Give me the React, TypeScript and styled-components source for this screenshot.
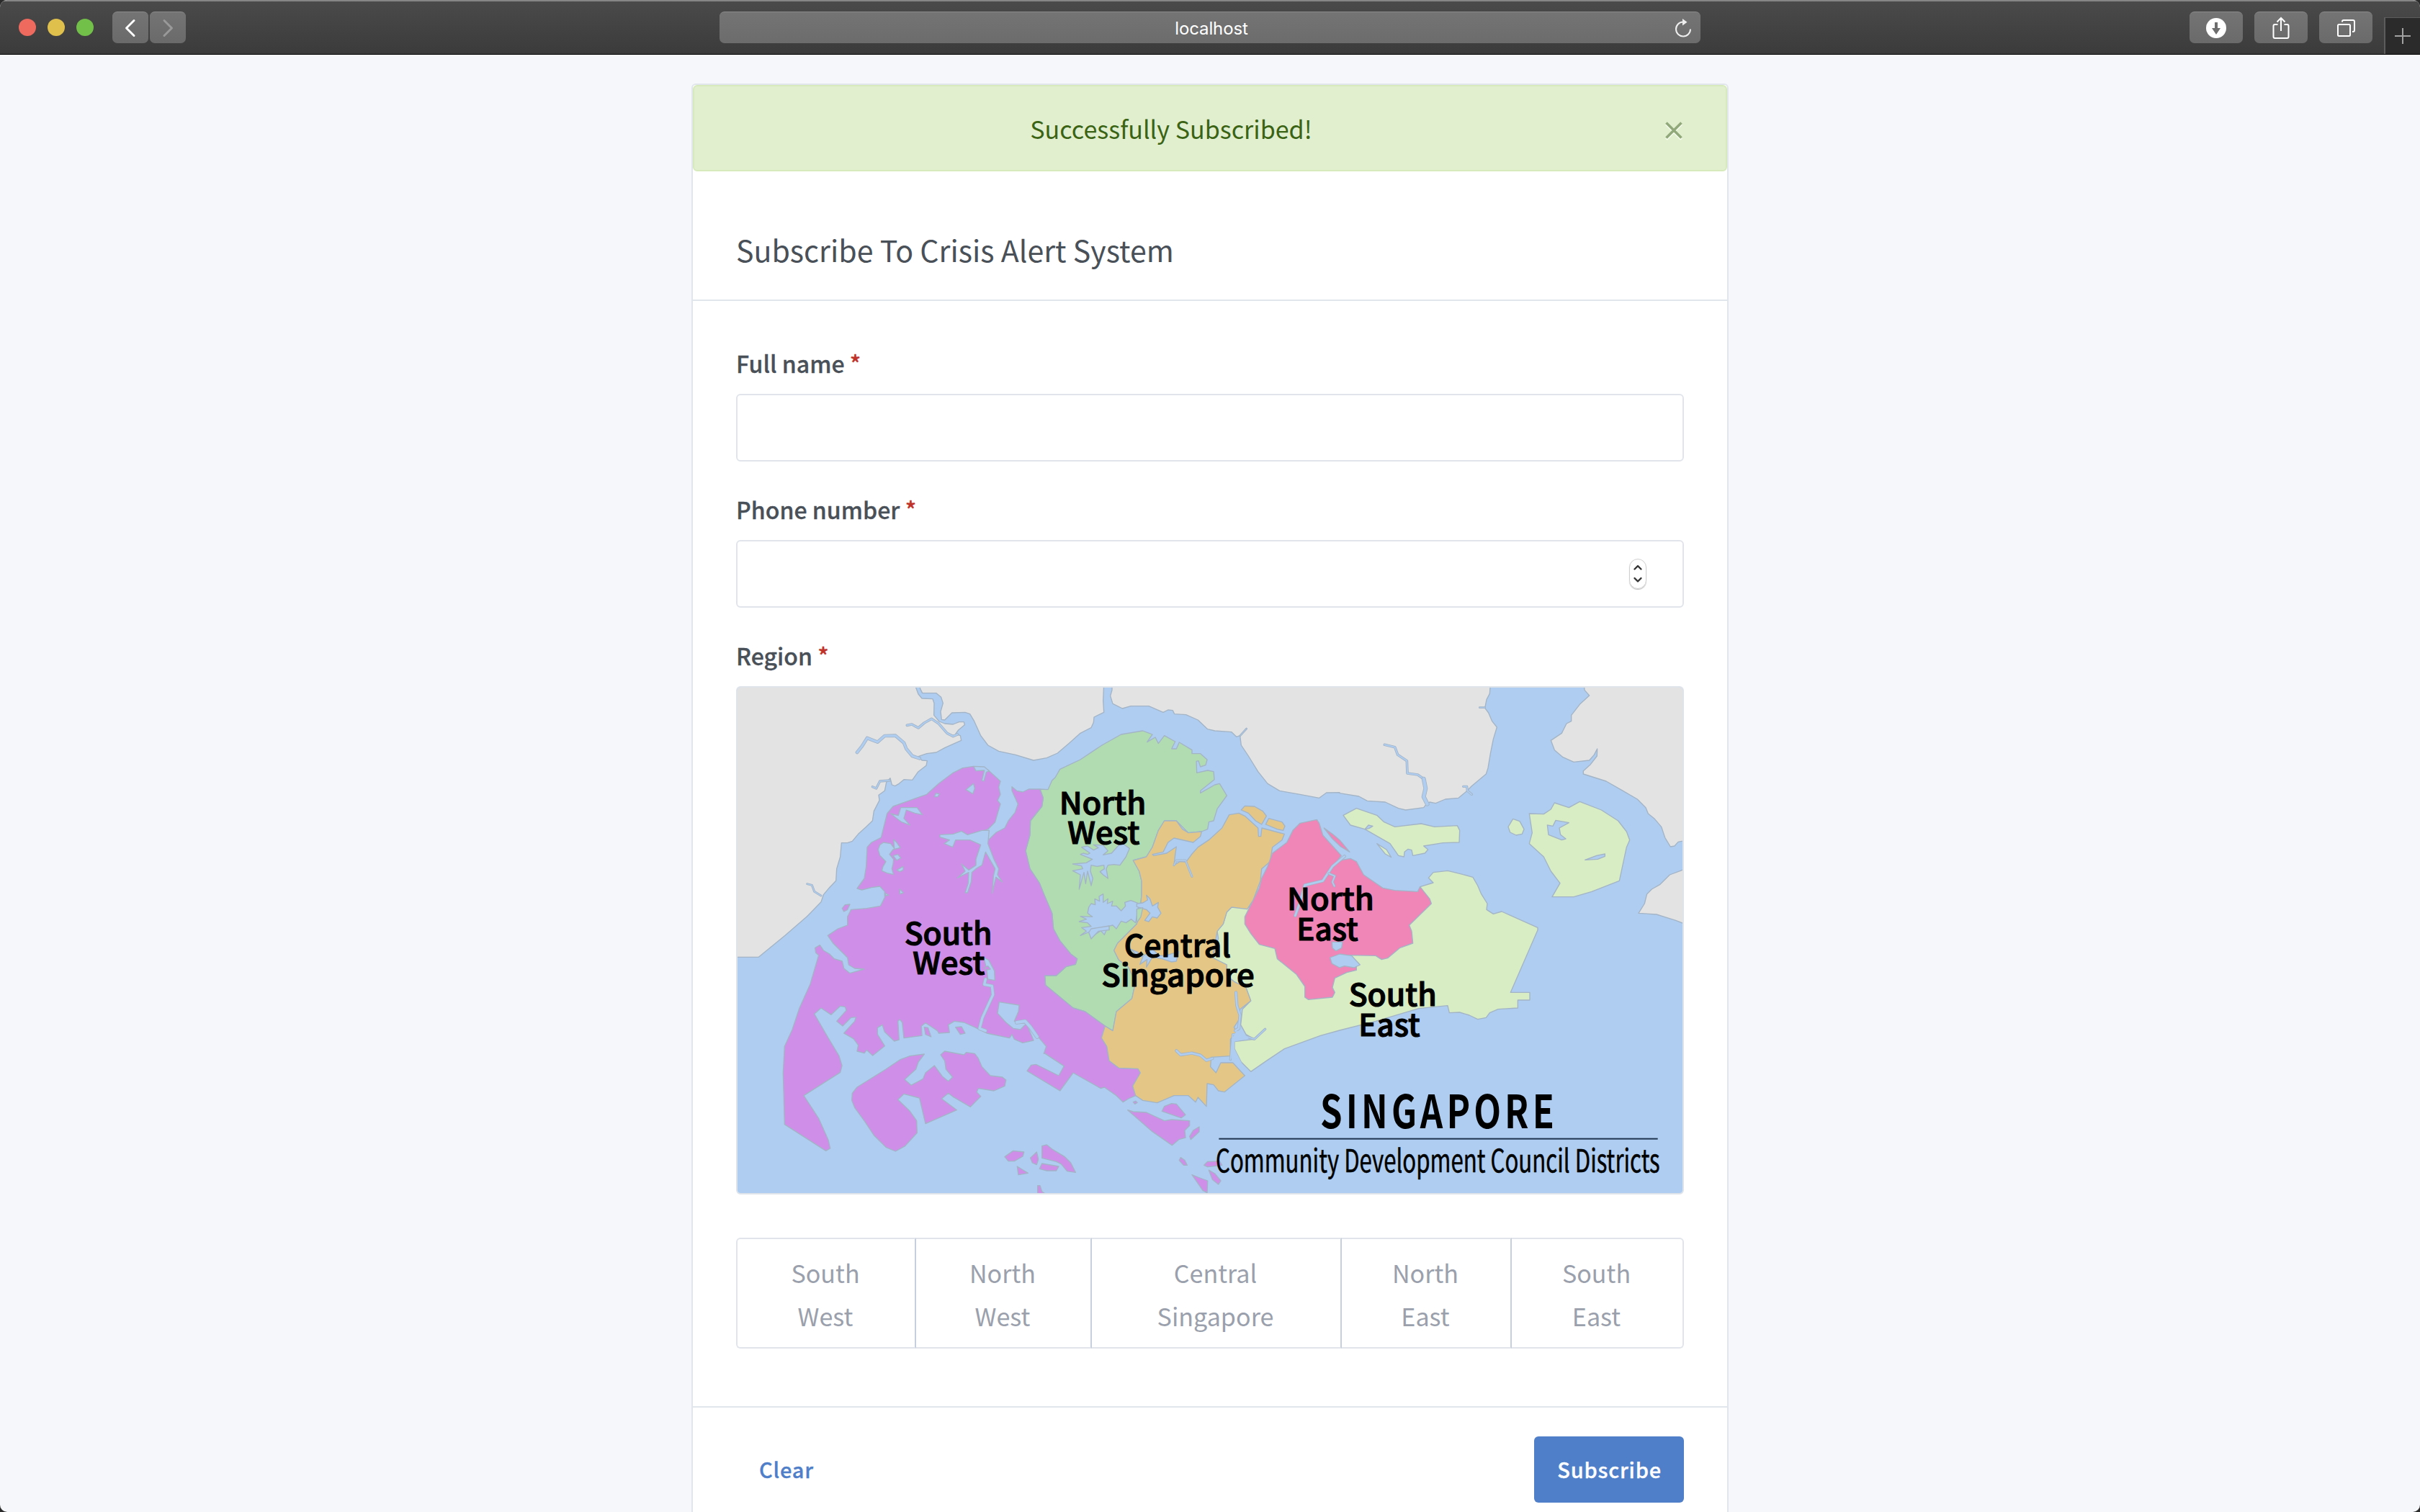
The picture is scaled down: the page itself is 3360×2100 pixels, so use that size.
import React from 'react';
import styled, { createGlobalStyle } from 'styled-components';

const sans = `"Noto Sans CJK SC", "Noto Sans", sans-serif`;

const GlobalStyle = createGlobalStyle`
  * { box-sizing: border-box; }
  html, body { margin: 0; padding: 0; background: #2b2b2b; }
  body { font-family: ${sans}; color: #495057; overflow: hidden; }
  button { font-family: inherit; }
`;

const BrowserWindow = styled.div`
  width: 3360px;
  height: 2100px;
  display: flex;
  flex-direction: column;
  overflow: hidden;
  border-radius: 10px;
  background: #f5f7fb;
`;

/* ---------- Browser toolbar ---------- */

const Toolbar = styled.header`
  flex: none;
  height: 76px;
  display: flex;
  align-items: flex-start;
  padding-left: 26px;
  background: linear-gradient(#4a4a4a, #3b3b3b);
  border-top: 2px solid #868686;
  border-bottom: 1px solid #000;
`;

const Lights = styled.div`
  display: flex;
  gap: 16px;
  margin: 24px 26px 0 0;
`;

const Light = styled.span<{ $color: string }>`
  width: 24px;
  height: 24px;
  border-radius: 50%;
  background: ${(p) => p.$color};
`;

const ToolButton = styled.button<{ $width: number }>`
  width: ${(p) => p.$width}px;
  height: 44px;
  margin-top: 14px;
  padding: 0;
  display: flex;
  align-items: center;
  justify-content: center;
  border: 0;
  border-top: 1px solid #8b8b8b;
  border-radius: 7px;
  background: linear-gradient(#747474, #6a6a6a);
`;

const NavGroup = styled.div`
  display: flex;
  gap: 2px;
  width: 843px;
`;

const AddressBar = styled.div`
  width: 1362px;
  height: 44px;
  margin-top: 14px;
  display: grid;
  grid-template-columns: 40px 1fr 38px;
  align-items: center;
  border-top: 1px solid #8b8b8b;
  border-radius: 7px;
  background: linear-gradient(#747474, #6c6c6c);
`;

const Address = styled.span`
  grid-column: 2;
  text-align: center;
  font: 400 24px/44px Inter, sans-serif;
  letter-spacing: -0.1px;
  padding: 1px 0 0 2px;
  color: #fff;
`;

const ToolGroup = styled.div`
  display: flex;
  gap: 16px;
  margin-left: auto;
  margin-right: 16px;
`;

const NewTab = styled.div`
  width: 50px;
  height: 51px;
  margin-top: 22px;
  display: flex;
  align-items: center;
  justify-content: center;
  background: #2b2b2b;
  border-left: 2px solid #5c5c5c;
  border-top: 1px solid #5c5c5c;
`;

/* ---------- Subscription card ---------- */

const Page = styled.main`
  flex: 1;
  min-height: 0;
  display: flex;
  justify-content: center;
  align-items: flex-start;
  padding-top: 40px;
`;

const Card = styled.form`
  width: 1440px;
  height: 2060px;
  border: 2px solid #e1e5ec;
  border-radius: 6px;
  background: #fff;
`;

const Alert = styled.div`
  height: 120px;
  display: flex;
  align-items: center;
  padding: 0 60px 0 26px;
  border: 2px solid #d6eabb;
  border-radius: 6px;
  background: #e1efcf;
`;

const AlertText = styled.span`
  flex: 1;
  text-align: center;
  font-size: 34.1px;
  line-height: 60px;
  color: #3a6314;
`;

const CloseButton = styled.button`
  width: 74px;
  height: 40px;
  padding: 8px 0 0;
  display: flex;
  align-items: center;
  justify-content: flex-end;
  border: 0;
  background: none;
`;

const CardHeader = styled.div`
  height: 180px;
  display: flex;
  align-items: center;
  padding: 38px 60px 0;
  border-bottom: 2px solid #e1e5ec;
`;

const CardTitle = styled.h3`
  margin: 0;
  font-size: 41.1px;
  font-weight: 400;
  line-height: 60px;
`;

const CardBody = styled.div`
  padding: 62px 60px 80px;
`;

const Field = styled.div<{ $last?: boolean }>`
  display: flex;
  flex-direction: column;
  gap: 19px;
  margin-bottom: ${(p) => (p.$last ? 60 : 42)}px;
`;

const Label = styled.label`
  font-size: 32.1px;
  font-weight: 500;
  line-height: 48px;
  -webkit-text-stroke: 0.3px currentColor;
`;

const Required = styled.span`
  color: #bf3229;
`;

const Input = styled.div`
  height: 94px;
  display: flex;
  align-items: center;
  justify-content: flex-end;
  padding-right: 50px;
  border: 2px solid #e1e5eb;
  border-radius: 6px;
`;

const Stepper = styled.span`
  width: 24px;
  height: 42px;
  display: flex;
  align-items: center;
  justify-content: center;
  border: 1px solid #cfcfcf;
  border-radius: 12px;
  box-shadow: 0 1px 1px #bdbdbd;
`;

const MapFrame = styled.div`
  height: 706px;
  border: 2px solid #dfe4ea;
  border-radius: 6px;
  overflow: hidden;

  svg { display: block; width: 100%; height: 100%; }
`;

const RegionPicker = styled.div`
  display: grid;
  grid-template-columns: 250px 244px 347px 236px 239px;
  height: 154px;
`;

const RegionOption = styled.div`
  display: flex;
  flex-direction: column;
  align-items: center;
  padding: 16px 2px 0 0;
  border: 2px solid #e1e5eb;
  border-left-width: 0;
  border-right-color: #c6cfdd;
  font-size: 34.1px;
  line-height: 60px;
  color: #9aa0ac;

  &:first-child { border-left-width: 2px; border-radius: 6px 0 0 6px; }
  &:last-child { border-right-color: #e1e5eb; border-radius: 0 6px 6px 0; }
`;

const CardFooter = styled.div`
  display: flex;
  justify-content: space-between;
  padding: 40px 60px 0;
  border-top: 2px solid #e1e5ec;
`;

const ActionButton = styled.button<{ $primary?: boolean }>`
  height: 92px;
  padding: 0 31px 3px 32px;
  border: 0;
  border-radius: 6px;
  font-size: 29px;
  font-weight: 500;
  letter-spacing: 0.8px;
  -webkit-text-stroke: 0.3px currentColor;
  background: ${(p) => (p.$primary ? '#507fca' : 'none')};
  color: ${(p) => (p.$primary ? '#fff' : '#507fca')};
`;

/* ---------- Map ---------- */

/* The map is stored as six survey tiles; every tile has its own origin. */
const tiles = {
  A: [0, 0],
  B: [0, 1050],
  C: [1170, 0],
  D: [1170, 1050],
  E: [2550, 0],
  F: [2550, 1050],
} as const;

type Tile = keyof typeof tiles;

/* Turns "A 1,2 3,4 C 5,6" into a point list in map coordinates. */
const pts = (source: string): string => {
  let origin: readonly [number, number] = tiles.A;
  const out: string[] = [];
  for (const token of source.trim().split(/\s+/)) {
    if (token in tiles) {
      origin = tiles[token as Tile];
    } else {
      const [x, y] = token.split(',').map(Number);
      out.push(`${x + origin[0]},${y + origin[1]}`);
    }
  }
  return out.join(' ');
};

const Areas = ({ fill, shapes }: { fill: string; shapes: string[] }) => (
  <g fill={fill} stroke="#a3b4c6" strokeWidth="4" strokeLinejoin="round">
    {shapes.map((s) => (
      <polygon key={s} points={pts(s)} />
    ))}
  </g>
);

const River = ({ line, width = 8 }: { line: string; width?: number }) => (
  <g fill="none" strokeLinejoin="round" strokeLinecap="round">
    <polyline points={pts(line)} stroke="#a3b4c6" strokeWidth={width + 5} />
    <polyline points={pts(line)} stroke="#aecdf0" strokeWidth={width} />
  </g>
);

const land = [
  'A 30,30 785,30 785,45 795,72 810,90 855,92 861,110 860,160 882,186 905,195 940,198 965,188 985,188 988,200 962,222 950,238 970,245 974,265 940,280 905,296 870,315 830,320 795,332 810,348 832,350 828,370 795,395 770,430 735,428 715,445 698,455 685,450 678,422 662,440 655,475 630,493 633,515 610,560 604,600 575,628 545,655 520,685 500,692 475,692 470,750 455,800 452,850 425,878 400,908 390,938 330,1000 240,1078 B 130,118 30,118',
  'A 800,30 803,50 812,68 870,68 890,85 898,110 888,145 892,178 905,180 935,150 990,148 1010,155 1028,185 1055,245 1085,285 1130,310 1200,325 1275,348 C 105,348 160,338 205,318 255,275 300,235 345,212 355,190 357,168 398,148 395,100 398,30',
  'C 432,30 432,55 425,80 435,112 475,132 510,122 585,122 645,148 665,138 685,140 692,155 740,158 790,180 830,218 860,225 930,230 950,250 965,245 970,285 1000,330 1040,395 1080,445 1130,475 1215,490 1295,505 1325,483 1380,482 E 0,485 80,498 115,517 190,522 245,548 275,555 350,545 360,532 375,522 400,527 440,510 495,505 525,480 550,455 610,405 618,380 628,320 640,260 655,210 635,185 620,150 605,130 612,95 625,70 628,30',
  'E 1018,30 1020,55 1040,78 1000,115 965,160 965,185 945,195 925,235 880,265 895,305 930,335 975,355 1040,348 1060,325 1073,300 1072,330 1045,365 1015,392 1015,405 1110,435 1180,475 1240,510 1275,545 1285,570 1310,590 1340,625 1355,670 1378,708 1395,705 1410,688 1450,680 1450,30',
  'E 1450,795 1420,808 1375,825 1335,865 1300,885 1280,905 1270,945 1245,985 1320,990 1400,1015 1450,1035',
];

const northWest = [
  'C 132,468 165,470 182,432 195,420 215,385 300,345 390,285 470,240 560,225 600,240 578,272 612,252 625,278 650,245 695,270 680,300 700,300 712,273 765,305 765,320 800,320 828,345 822,368 800,375 792,350 783,352 785,400 830,390 855,395 858,428 800,475 800,484 860,450 880,445 910,495 870,550 855,600 835,605 830,635 805,645 750,650 720,620 700,600 650,600 625,640 600,710 575,750 520,765 545,810 555,850 555,910 550,960 535,1030 500,1065 D 480,35 455,60 440,90 460,130 500,160 530,220 515,290 450,345 435,425 403,405 375,385 320,345 270,330 155,235 152,195 200,195 240,158 280,148 287,125 260,105 215,50 C 188,1050 182,985 150,910 130,860 90,800 72,725 90,660 92,600 140,540 145,505',
];

const southWest = [
  'A 1025,373 980,380 940,400 880,445 830,490 760,515 690,540 665,570 650,630 640,670 600,690 582,710 578,790 570,840 540,882 560,888 600,878 635,873 655,895 655,920 637,955 580,965 515,970 500,1000 500,1035 460,1050 B 418,28 440,60 500,120 505,150 530,165 570,168 510,185 485,165 478,135 445,125 425,105 400,90 385,68 365,80 368,100 380,110 345,230 300,330 270,420 238,490 232,600 238,815 410,925 428,915 420,880 380,790 318,695 470,598 477,570 465,530 420,455 362,355 390,330 432,358 470,322 490,325 495,340 455,385 480,405 515,370 535,368 530,385 485,435 525,458 545,485 540,510 570,518 580,505 605,528 655,488 625,440 625,412 645,400 655,430 695,468 715,462 710,385 718,378 728,390 735,455 810,445 808,405 825,392 845,405 875,425 880,435 925,432 920,400 945,385 985,390 1030,410 1080,435 1175,455 1185,440 1195,460 1230,475 1275,465 1250,405 1265,405 1290,445 1328,490 1318,520 D 150,518 232,572 210,612 115,565 95,568 78,592 215,675 270,600 385,665 400,660 450,695 478,722 500,708 530,695 518,655 550,600 540,583 460,580 420,550 410,490 388,455 403,405 375,385 320,345 270,330 155,235 152,195 200,195 240,158 280,148 287,125 260,105 215,50 C 188,1050 182,985 150,910 130,860 90,800 72,725 90,660 92,600 140,540 145,505 132,468 85,468 60,480 35,475 15,458 15,475 40,530 28,565 0,600 -15,630 -50,648 -88,685 -100,700 -100,640 A 1085,635 1115,605 1125,570 1137,530 1125,515 1137,490 1130,460 1137,435 1090,392 1070,380 1035,390',
  'B 820,522 760,530 720,545 660,585 540,660 520,685 518,715 530,745 570,800 610,860 660,910 700,927 740,905 790,850 788,800 760,760 710,712 735,688 800,705 825,812 955,755 892,708 920,685 940,700 1012,742 1055,698 1038,680 1045,665 1110,675 1155,655 1160,630 1145,618 1095,612 1060,575 1045,540 1030,520 995,515 985,525 905,510 888,525 905,550 910,585 938,618 920,635 895,615 862,570 825,600 815,625 765,652 738,628 785,585 795,555',
  'B 1155,950 1190,925 1235,930 1230,948 1195,968 1170,968',
  'B 1262,955 1288,930 1295,960 1288,983 1270,975',
  'B 1207,990 1252,1018 1212,1025',
  'D 140,905 160,900 185,920 235,950 260,975 280,1015 245,1010 220,980 200,970 140,955',
  'D 140,978 210,990 200,1008 160,1008 130,1000',
  'D 122,1070 132,1070 140,1095 155,1105 122,1105',
  'D 497,755 520,762 575,765 650,800 680,795 755,800 755,820 735,840 738,870 710,878 682,902 600,845',
  'D 680,728 700,730 738,775 720,788 640,760 650,740',
  'D 795,825 795,845 760,878 755,865 770,840',
  'D 718,953 735,965 745,985 730,985 712,965',
  'D 765,1025 790,1035 830,1050 828,1100 810,1090',
  'D 835,1005 860,1020 885,1050 875,1065 850,1045',
  'D 815,985 830,970 880,968 890,985 830,992',
  'D 520,722 530,718 537,724 527,730',
  'A 478,965 490,950 510,948 500,970 485,978',
];

const southEast = [
  'C 930,960 1000,960 E 290,1000 340,960 370,940 335,875 390,858 370,838 390,815 450,808 500,820 555,835 575,870 590,905 615,945 612,970 640,988 675,978 825,1045 F 825,5 712,265 792,265 792,297 742,297 742,330 660,335 625,350 610,370 575,377 540,360 500,348 457,350 450,320 330,332 150,385 0,423 D 1300,445 1150,500 1075,550 1010,595 970,555 942,500 942,470 1025,460 990,440 968,400 975,335 1010,300 990,245 940,220 910,195 910,150 850,120 875,40 870,10 C 895,1030 910,980',
  'E 15,577 70,548 155,577 185,605 230,625 340,612 395,625 490,620 500,640 498,690 430,692 350,705 368,720 355,735 305,745 300,722 285,718 270,730 268,750 245,745 210,695 105,635 45,618',
  'E 790,570 850,572 880,552 895,525 955,545 1000,520 1090,555 1160,600 1195,645 1208,680 1195,710 1165,850 1050,895 975,917 885,917 918,860 880,810 850,750 790,695 802,650',
  'E 722,592 750,602 768,635 760,655 735,660 710,648 702,625',
  'E 155,695 195,720 215,752 190,738',
];

const central = [
  'C 520,765 575,750 600,710 625,640 650,600 700,600 725,635 750,650 805,645 800,665 770,690 690,672 665,690 645,730 600,740 605,745 660,735 700,708 695,740 690,785 715,770 740,772 765,738 790,710 835,680 890,630 920,575 960,568 985,580 1040,630 1042,665 1052,665 1056,630 1150,655 1140,680 1100,710 1090,770 1055,800 1050,850 1020,930 995,968 930,960 910,980 895,1030 D 870,10 850,120 910,150 910,195 940,220 990,245 1010,300 965,335 960,380 940,410 950,430 925,460 925,530 845,535 842,575 865,600 885,558 935,558 985,612 900,680 875,675 855,650 828,645 825,740 790,702 780,722 750,695 690,695 620,725 560,715 530,695 518,655 550,600 540,583 460,580 420,550 410,490 388,455 403,405 435,425 450,345 515,290 530,220 500,160 460,130 440,90 455,60 480,35 C 500,1065 535,1030 550,960 555,910 555,850 545,810',
  'C 970,555 985,538 1025,540 1060,560 1075,580 1055,615 1030,600 1000,568',
  'C 1085,590 1140,605 1152,622 1145,640 1120,635 1072,615',
];

const northEast = [
  'C 1285,595 1215,610 1185,640 1160,690 1100,735 1080,790 1055,840 1045,880 1020,930 985,1000 985,1030 1010,1070 D 1045,65 1110,82 1120,125 1200,190 1235,240 1235,285 1250,295 1350,285 1360,265 1350,245 1360,205 1410,182 F 70,172 70,155 40,110 150,112 175,128 200,122 250,80 305,60 300,10 E 290,1035 382,945 375,925 335,875 325,895 230,890 180,880 100,825 70,770 45,757 0,765 C 1360,780 1387,745 1310,660 1295,610',
  'C 1315,630 1350,655 1380,680 1422,730 1385,708 1350,675',
];

const lakes = [
  'A 885,658 940,655 975,643 1000,658 1060,640 1090,640 1085,695 1110,760 1130,800 1125,825 1145,855 1118,835 1103,902 1108,830 1115,800 1075,730 1060,785 1035,800 1018,815 1015,855 1000,900 990,900 1003,860 1005,815 958,838 990,810 975,780 1005,805 1035,785 1035,760 1055,700 1010,680 950,680 938,710 903,695 925,680 885,668',
  'A 993,470 1025,445 1030,465 1022,488',
  'A 862,500 868,485 883,488 876,500',
  'A 680,570 712,578 722,545 790,545 812,575 780,568 745,555 735,590 760,618 725,605 705,590',
  'A 628,720 635,700 650,690 680,695 695,715 692,678 705,690 720,712 690,720 675,740 692,760 690,780 685,800 692,824 665,818 643,808 648,790 660,770 635,745',
  'A 690,745 710,740 722,755 705,765',
  'A 705,805 732,790 732,805 718,812',
  'A 718,885 733,900 718,905',
  'A 655,900 672,910 660,912',
  'A 1025,373 1070,375 1090,392 1078,398 1068,435 1060,432 1070,390 1035,392',
  'B 1132,305 1215,318 1212,345 1195,385 1245,395 1220,420 1190,415 1160,390 1125,352',
  'B 1068,120 1088,130 1112,175 1114,215 1085,210 1080,170',
  'C 268,780 325,775 350,760 300,740 312,735 330,740 340,735 305,710 330,705 355,722 375,712 355,700 395,702 415,725 395,742 430,735 470,690 505,715 490,750 465,785 440,782 415,785 408,800 415,840 395,825 382,812 400,800 398,785 370,790 345,785 342,810 352,840 345,870 330,810 322,862 315,815 295,885 300,825 268,808 310,800 305,788',
  'C 335,960 345,945 362,950 360,925 380,935 378,915 395,905 395,940 415,925 412,945 435,935 430,955 450,955 470,975 488,955 485,940 510,932 545,945 530,1025 512,1010 490,1025 470,1018 450,1050 435,1035 415,1040 400,1075 385,1058 360,1075 340,1062 300,1078 325,1060 305,1045 345,1040 330,1025 295,1020 325,1010 300,998 350,1000 330,985',
  'C 535,945 560,942 580,930 575,910 590,925 600,955 625,940 622,960 636,985 620,1005 600,1000 585,1020 568,1015 590,985 575,970 535,958',
  'D 345,0 375,-5 420,-12 420,5 375,10 345,42 335,15',
  'D 510,85 540,98 560,115 600,85 630,112 660,110 710,95 700,135 680,138 640,125 600,118 575,160 578,128 548,148 560,118 530,105',
  'D 1340,120 1380,105 1430,112 1465,150 1440,162 1400,155 1380,162 1348,145',
  'D 1348,55 1392,55 1388,80 1365,92 1350,80',
  'E 865,618 888,622 900,598 955,608 915,630 920,658 942,675 925,680 870,658',
  'E 1022,763 1070,745 1105,738 1105,748 1075,760',
  'E 105,635 120,618 138,622 122,632',
];

const DistrictName = ({ x, y, w, children }: { x: number; y: number; w: number; children: string }) => (
  <text
    x={x}
    y={y}
    textLength={w}
    lengthAdjust="spacingAndGlyphs"
    fontSize="128"
    fontWeight="500"
    stroke="#000"
    strokeWidth="3.5"
  >
    {children}
  </text>
);

const DistrictMap = () => (
  <svg viewBox="42 45 3936 2106" preserveAspectRatio="none" fontFamily={sans}>
    <rect x="42" y="45" width="3936" height="2106" fill="#aecdf0" />
    <Areas fill="#e3e3e3" shapes={land} />
    <River line="A 540,315 560,290 582,255 625,272 655,246 700,245 735,275 745,300 770,330 800,340" width={9} />
    <River line="A 748,202 768,198 795,213 820,192 850,175 880,195 915,235 940,248 958,240" width={6} />
    <River line="A 604,458 620,465 635,435 675,432" width={5} />
    <River line="A 332,863 352,868 362,895 390,912" width={4} />
    <River line="C 992,216 966,245" width={3} />
    <River line="E 187,283 230,293 242,325 280,350 282,402 325,408 350,425" width={6} />
    <River line="E 350,425 358,465 350,500 365,530" width={13} />
    <River line="E 515,457 530,457 532,475 550,490" width={5} />
    <River line="E 583,128 605,128" width={3} />
    <Areas fill="#b1dcb1" shapes={northWest} />
    <Areas fill="#cf8fe8" shapes={southWest} />
    <Areas fill="#d8edc4" shapes={southEast} />
    <Areas fill="#e4c786" shapes={central} />
    <Areas fill="#f085b7" shapes={northEast} />
    <Areas fill="#aecdf0" shapes={lakes} />
    <River line="B 1075,210 1070,232 1102,238 1106,275 1085,320 1062,370 1050,415 1075,425" width={10} />
    <River line="B 1205,390 1240,385 1262,410 1290,450" width={12} />
    <River line="C 690,785 700,765 738,765 765,832" width={4} />
    <River line="C 1400,748 1350,790 1310,850 1235,868 1215,940 1195,995" width={8} />
    <River line="C 1335,820 1360,830 1350,855 1358,872" width={5} />
    <River line="D 700,508 718,525 765,518 800,527 825,548 850,540" width={8} />
    <River line="D 948,265 952,320 965,360 960,415 945,425" width={8} />
    <River line="D 925,545 935,440 965,440 1025,460 1070,418" width={5} />
    <polygon points={pts('D 928,540 930,462 950,425 975,430 1000,455 942,470 942,500 970,555 985,590')} fill="#aecdf0" />
    <Areas
      fill="#cf8fe8"
      shapes={[
        'B 820,410 835,412 848,450 825,440',
        'B 950,410 975,408 990,435 970,440',
        'B 1068,162 1085,155 1095,168 1078,172',
      ]}
    />
    <Areas fill="#b1dcb1" shapes={['C 535,968 560,962 552,1000 535,1025']} />
    <DistrictName x={737} y={1115} w={365}>South</DistrictName>
    <DistrictName x={772} y={1238} w={300}>West</DistrictName>
    <DistrictName x={1382} y={572} w={362}>North</DistrictName>
    <DistrictName x={1417} y={695} w={300}>West</DistrictName>
    <DistrictName x={1652} y={1167} w={445}>Central</DistrictName>
    <DistrictName x={1558} y={1290} w={637}>Singapore</DistrictName>
    <DistrictName x={2331} y={973} w={362}>North</DistrictName>
    <DistrictName x={2371} y={1097} w={256}>East</DistrictName>
    <DistrictName x={2588} y={1371} w={366}>South</DistrictName>
    <DistrictName x={2629} y={1496} w={256}>East</DistrictName>
    <text x="2469" y="1880" fontSize="191" fontWeight="700" letterSpacing="20" textLength="990" lengthAdjust="spacingAndGlyphs">
      SINGAPORE
    </text>
    <rect x="2047" y="1922" width="1828" height="6" fill="#1f3550" />
    <text x="2034" y="2065" fontSize="132" textLength="1850" lengthAdjust="spacingAndGlyphs" stroke="#000" strokeWidth="1.5">
      Community Development Council Districts
    </text>
  </svg>
);

/* ---------- Screen ---------- */

const regions = [
  ['South', 'West'],
  ['North', 'West'],
  ['Central', 'Singapore'],
  ['North', 'East'],
  ['South', 'East'],
];

export default function App() {
  return (
    <>
      <GlobalStyle />
      <BrowserWindow>
        <Toolbar>
          <Lights>
            <Light $color="#ee6a5f" />
            <Light $color="#e0c04c" />
            <Light $color="#72bf49" />
          </Lights>
          <NavGroup>
            <ToolButton type="button" $width={50}>
              <svg width="50" height="44" viewBox="0 0 50 44" fill="none" stroke="#fff" strokeWidth="3" strokeLinecap="round" strokeLinejoin="round">
                <path d="M30 11.500L19.500 22L30 32.500" />
              </svg>
            </ToolButton>
            <ToolButton type="button" $width={50}>
              <svg width="50" height="44" viewBox="0 0 50 44" fill="none" stroke="#999" strokeWidth="3" strokeLinecap="round" strokeLinejoin="round">
                <path d="M20 11.500L30.500 22L20 32.500" />
              </svg>
            </ToolButton>
          </NavGroup>
          <AddressBar>
            <Address>localhost</Address>
            <svg width="28" height="28" viewBox="0 0 28 28" fill="none" stroke="#eee" strokeWidth="2">
              <path d="M13.500 4.500A10 10 0 1 0 24 14.500" />
              <path d="M13 0L19.500 4.800L13 9.600Z" fill="#eee" stroke="none" />
            </svg>
          </AddressBar>
          <ToolGroup>
            <ToolButton type="button" $width={74}>
              <svg width="30" height="30" viewBox="0 0 30 30">
                <circle cx="15" cy="15" r="14" fill="#fff" />
                <path d="M13 7h4v8h4l-6 9-6-9h4z" fill="#6d6d6d" />
              </svg>
            </ToolButton>
            <ToolButton type="button" $width={74}>
              <svg width="26" height="34" viewBox="0 0 26 34" fill="none" stroke="#fff" strokeWidth="2">
                <path d="M8.500 12H4.500A2 2 0 0 0 2.500 14V29A2 2 0 0 0 4.500 31H21.500A2 2 0 0 0 23.500 29V14A2 2 0 0 0 21.500 12H17.500M13 21V3M7.500 8.500L13 3L18.500 8.500" />
              </svg>
            </ToolButton>
            <ToolButton type="button" $width={74}>
              <svg width="26" height="26" viewBox="0 0 26 26" fill="none" stroke="#fff" strokeWidth="2">
                <rect x="2" y="8" width="17" height="16" rx="1.500" />
                <path d="M8 4.500V4A2 2 0 0 1 10 2H23A2 2 0 0 1 25 4V16A2 2 0 0 1 23 18H22" />
              </svg>
            </ToolButton>
          </ToolGroup>
          <NewTab>
            <svg width="22" height="22" viewBox="0 0 22 22" stroke="#a2a2a2" strokeWidth="2">
              <path d="M11 0V22M0 11H22" />
            </svg>
          </NewTab>
        </Toolbar>

        <Page>
          <Card>
            <Alert>
              <AlertText>Successfully Subscribed!</AlertText>
              <CloseButton type="button">
                <svg width="24" height="26" viewBox="0 0 24 26" fill="none" strokeWidth="3.600">
                  <path d="M1.500 3.500L22.500 24.500M22.500 3.500L1.500 24.500" stroke="#f6fbef" />
                  <path d="M1.500 1.500L22.500 22.500M22.500 1.500L1.500 22.500" stroke="#91a97a" />
                </svg>
              </CloseButton>
            </Alert>
            <CardHeader>
              <CardTitle>Subscribe To Crisis Alert System</CardTitle>
            </CardHeader>
            <CardBody>
              <Field>
                <Label>Full name <Required>*</Required></Label>
                <Input />
              </Field>
              <Field>
                <Label>Phone number <Required>*</Required></Label>
                <Input>
                  <Stepper>
                    <svg width="14" height="26" viewBox="0 0 14 26" fill="none" stroke="#333" strokeWidth="2.400" strokeLinecap="round" strokeLinejoin="round">
                      <path d="M2.500 6.500L7 2L11.500 6.500M2.500 19L7 23.500L11.500 19" />
                    </svg>
                  </Stepper>
                </Input>
              </Field>
              <Field $last>
                <Label>Region <Required>*</Required></Label>
                <MapFrame>
                  <DistrictMap />
                </MapFrame>
              </Field>
              <RegionPicker>
                {regions.map(([first, second]) => (
                  <RegionOption key={first + second}>
                    <span>{first}</span>
                    <span>{second}</span>
                  </RegionOption>
                ))}
              </RegionPicker>
            </CardBody>
            <CardFooter>
              <ActionButton type="button">Clear</ActionButton>
              <ActionButton type="button" $primary>Subscribe</ActionButton>
            </CardFooter>
          </Card>
        </Page>
      </BrowserWindow>
    </>
  );
}
